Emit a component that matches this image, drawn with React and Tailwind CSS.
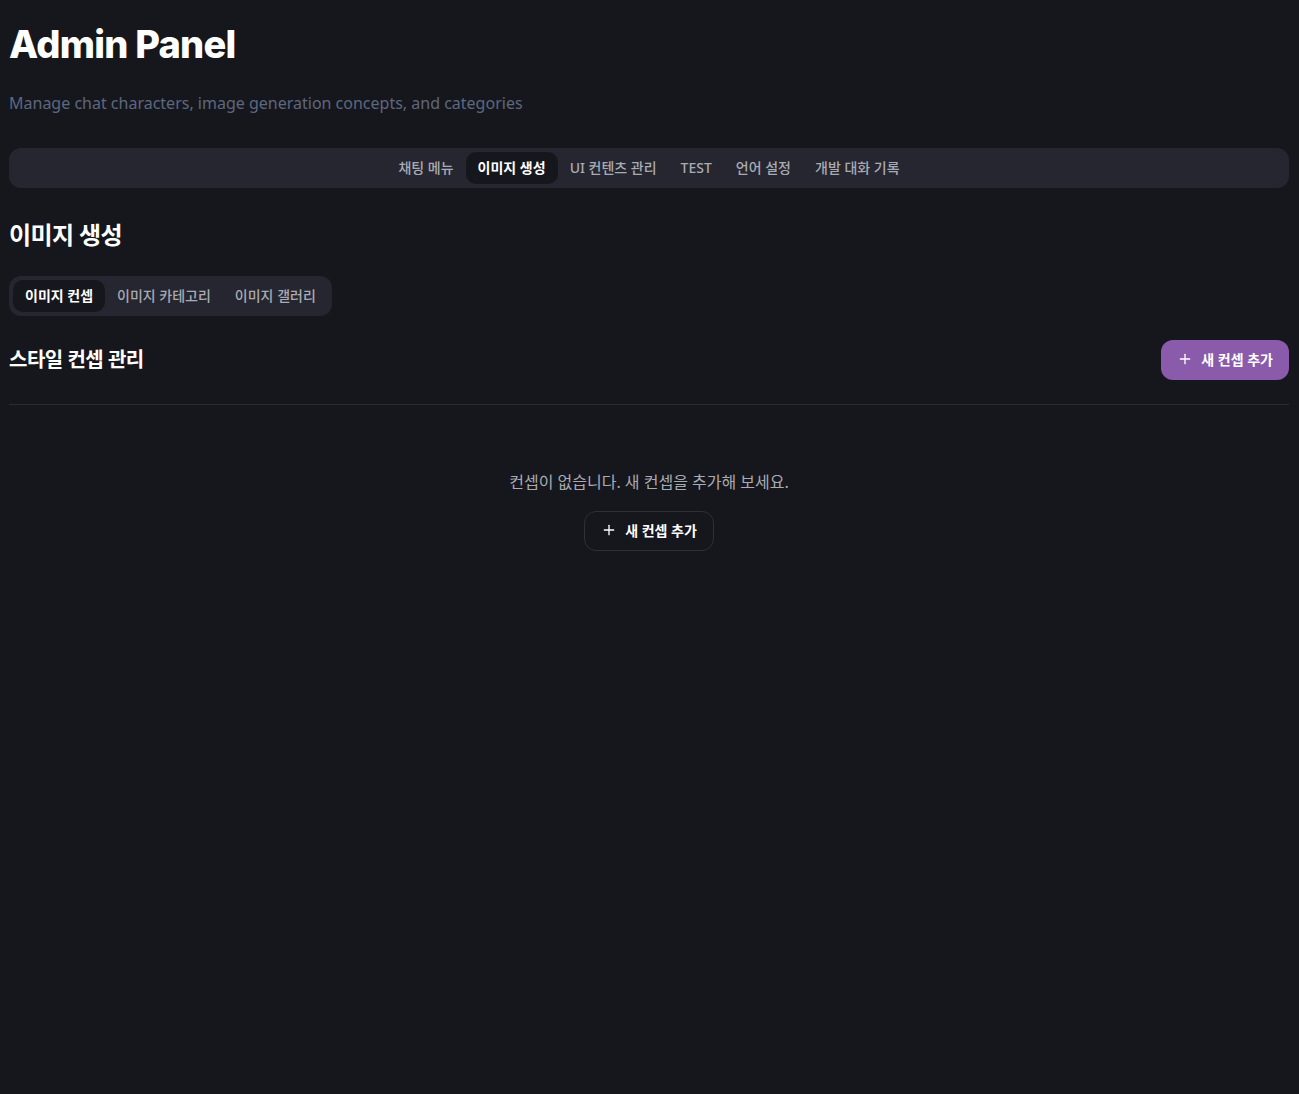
import React from "react";

const kr = { fontFamily: '"Noto Sans", "Noto Sans CJK KR", sans-serif' };

function Plus() {
  return (
    <svg width="16" height="16" viewBox="0 0 24 24" fill="none" stroke="currentColor" strokeWidth="2" strokeLinecap="round" strokeLinejoin="round">
      <path d="M5 12h14" />
      <path d="M12 5v14" />
    </svg>
  );
}

export default function App() {
  const topTabs = ["채팅 메뉴", "이미지 생성", "UI 컨텐츠 관리", "TEST", "언어 설정", "개발 대화 기록"];
  const subTabs = ["이미지 컨셉", "이미지 카테고리", "이미지 갤러리"];
  return (
    <div className="min-h-screen bg-[#16171d] text-white" style={kr}>
      <div className="pl-[9px] pr-[10px] pt-[24px]">
        <h1
          className="text-[38px] leading-[40px] font-extrabold tracking-[-0.02em] text-white"
          style={{ fontFamily: 'Inter, "Noto Sans", sans-serif' }}
        >
          Admin Panel
        </h1>
        <p className="mt-[27px] text-[16px] leading-[24px] text-[#5d6780]">
          Manage chat characters, image generation concepts, and categories
        </p>

        <div className="mt-[33px] flex h-[40px] items-center justify-center rounded-xl bg-[#262630] p-1">
          {topTabs.map((t, i) => (
            <div
              key={t}
              className={
                "flex h-8 items-center rounded-[10px] px-3 pb-[2px] text-[14px] font-medium " +
                (i === 1 ? "bg-[#16171d] text-white font-semibold" : "text-[#a9abb4]")
              }
            >
              {t}
            </div>
          ))}
        </div>

        <h2 className="mt-[31px] text-[24px] leading-[32px] font-bold tracking-tight text-white">이미지 생성</h2>

        <div className="mt-[25px] inline-flex h-[40px] items-center rounded-xl bg-[#262630] p-1">
          {subTabs.map((t, i) => (
            <div
              key={t}
              className={
                "flex h-8 items-center rounded-[10px] px-3 pb-[2px] text-[14px] font-medium " +
                (i === 0 ? "bg-[#16171d] text-white font-semibold" : "text-[#a9abb4]")
              }
            >
              {t}
            </div>
          ))}
        </div>

        <div className="mt-[24px] flex items-center justify-between border-b border-[#2a2b33] pb-[24px]">
          <h3 className="text-[20px] leading-[28px] font-semibold tracking-tight text-white">스타일 컨셉 관리</h3>
          <button className="flex h-10 items-center gap-2 rounded-xl bg-[#8a5bab] px-4 pb-[2px] text-[14px] font-semibold text-white">
            <Plus />
            새 컨셉 추가
          </button>
        </div>

        <div className="flex flex-col items-center pt-[65px]">
          <p className="text-[16px] leading-[24px] text-[#a9abb4]">컨셉이 없습니다. 새 컨셉을 추가해 보세요.</p>
          <button className="mt-[17px] flex h-10 items-center gap-2 rounded-xl border border-[#2e2f38] px-4 pb-[2px] text-[14px] font-semibold text-white">
            <Plus />
            새 컨셉 추가
          </button>
        </div>
      </div>
    </div>
  );
}
